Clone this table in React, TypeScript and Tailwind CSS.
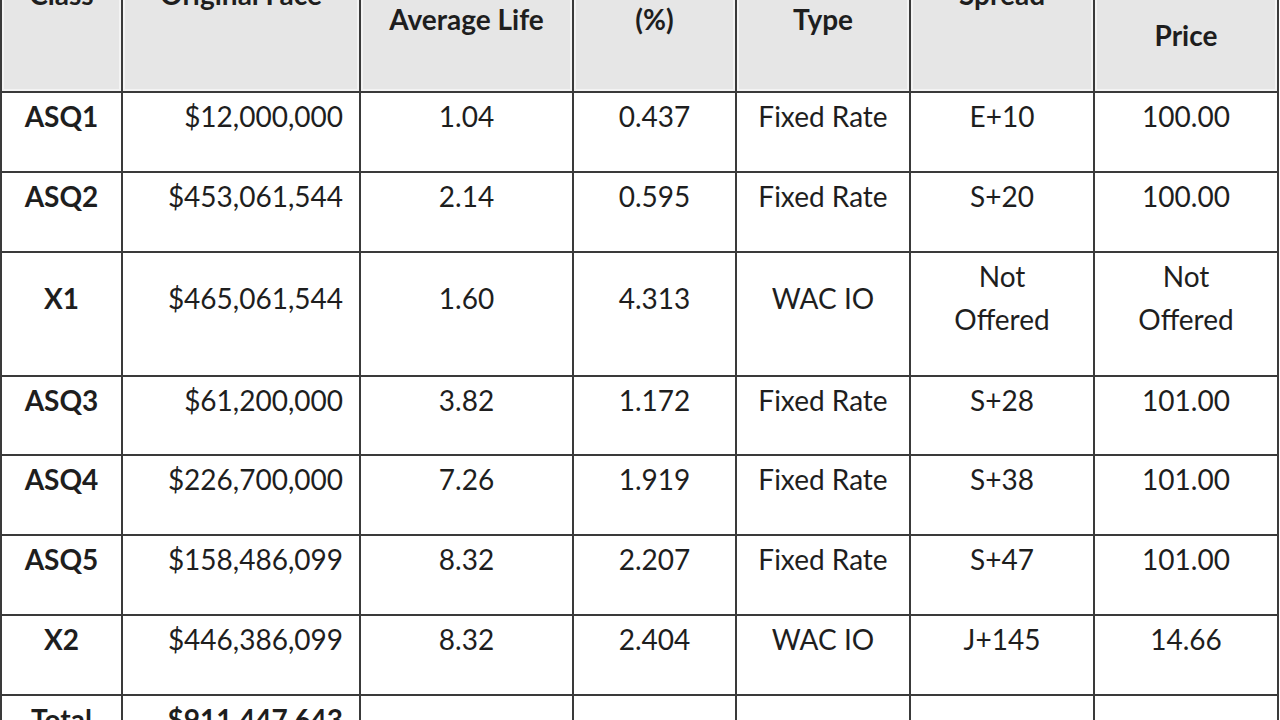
const cols = "grid grid-cols-[121px_238px_213px_163px_174px_184px_184px]";

type Row = {
  cls: string;
  face: string;
  life: string;
  coupon: string;
  type: string;
  spread: string[];
  price: string[];
  h: string;
  bold?: boolean;
};

const rows: Row[] = [
  { cls: "ASQ1", face: "$12,000,000", life: "1.04", coupon: "0.437", type: "Fixed Rate", spread: ["E+10"], price: ["100.00"], h: "h-[80px]" },
  { cls: "ASQ2", face: "$453,061,544", life: "2.14", coupon: "0.595", type: "Fixed Rate", spread: ["S+20"], price: ["100.00"], h: "h-[80px]" },
  { cls: "X1", face: "$465,061,544", life: "1.60", coupon: "4.313", type: "WAC IO", spread: ["Not", "Offered"], price: ["Not", "Offered"], h: "h-[124px]" },
  { cls: "ASQ3", face: "$61,200,000", life: "3.82", coupon: "1.172", type: "Fixed Rate", spread: ["S+28"], price: ["101.00"], h: "h-[79px]" },
  { cls: "ASQ4", face: "$226,700,000", life: "7.26", coupon: "1.919", type: "Fixed Rate", spread: ["S+38"], price: ["101.00"], h: "h-[80px]" },
  { cls: "ASQ5", face: "$158,486,099", life: "8.32", coupon: "2.207", type: "Fixed Rate", spread: ["S+47"], price: ["101.00"], h: "h-[80px]" },
  { cls: "X2", face: "$446,386,099", life: "8.32", coupon: "2.404", type: "WAC IO", spread: ["J+145"], price: ["14.66"], h: "h-[80px]" },
  { cls: "Total", face: "$911,447,643", life: "", coupon: "", type: "", spread: [""], price: [""], h: "h-[80px]", bold: true },
];

function Cell({ lines, block, align = "center", bold }: { lines: string[]; block: string; align?: "center" | "right"; bold?: boolean }) {
  return (
    <div className="border-r-2 border-[#3a3a3a] pt-[2px]">
      <div
        className={`flex flex-col justify-center ${block} ${align === "right" ? "items-end pr-[16px]" : "items-center"} ${bold ? "font-bold" : ""}`}
      >
        {lines.map((l, i) => (
          <span key={i}>{l}</span>
        ))}
      </div>
    </div>
  );
}

function HeadCell({ lines, pt }: { lines: string[]; pt: string }) {
  return (
    <div className={`border-r-2 border-[#3a3a3a] bg-[#e6e6e6] shadow-[inset_0_0_0_2px_#f3f3f3] flex flex-col items-center ${pt}`}>
      {lines.map((l, i) => (
        <span key={i}>{l}</span>
      ))}
    </div>
  );
}

export default function App() {
  return (
    <div className="w-[1280px] h-[720px] overflow-hidden bg-white font-['Lato','Open_Sans',sans-serif] text-[28px] leading-[43px] text-[#1e1e1e]">
      <div className="-mt-[80px] w-[1279px] border-l-2 border-[#3a3a3a]">
        {/* header */}
        <div className={`${cols} h-[173px] border-b-2 border-[#3a3a3a] font-bold`}>
          <HeadCell lines={["Class"]} pt="pt-[53px]" />
          <HeadCell lines={["Original Face"]} pt="pt-[53px]" />
          <HeadCell lines={["Expected", "Average Life"]} pt="pt-[35px]" />
          <HeadCell lines={["Coupon", "(%)"]} pt="pt-[35px]" />
          <HeadCell lines={["Coupon", "Type"]} pt="pt-[35px]" />
          <HeadCell lines={["Pricing", "Spread"]} pt="pt-[10px]" />
          <HeadCell lines={["Price"]} pt="pt-[94px]" />
        </div>

        {/* body rows */}
        {rows.map((r) => {
          const block = r.spread.length > 1 ? "h-[86px]" : "h-[43px]";
          return (
            <div key={r.cls} className={`${cols} ${r.h} border-b-2 border-[#3a3a3a]`}>
              <Cell lines={[r.cls]} block={block} bold />
              <Cell lines={[r.face]} block={block} align="right" bold={r.bold} />
              <Cell lines={[r.life]} block={block} />
              <Cell lines={[r.coupon]} block={block} />
              <Cell lines={[r.type]} block={block} />
              <Cell lines={r.spread} block={block} />
              <Cell lines={r.price} block={block} />
            </div>
          );
        })}
      </div>
    </div>
  );
}
